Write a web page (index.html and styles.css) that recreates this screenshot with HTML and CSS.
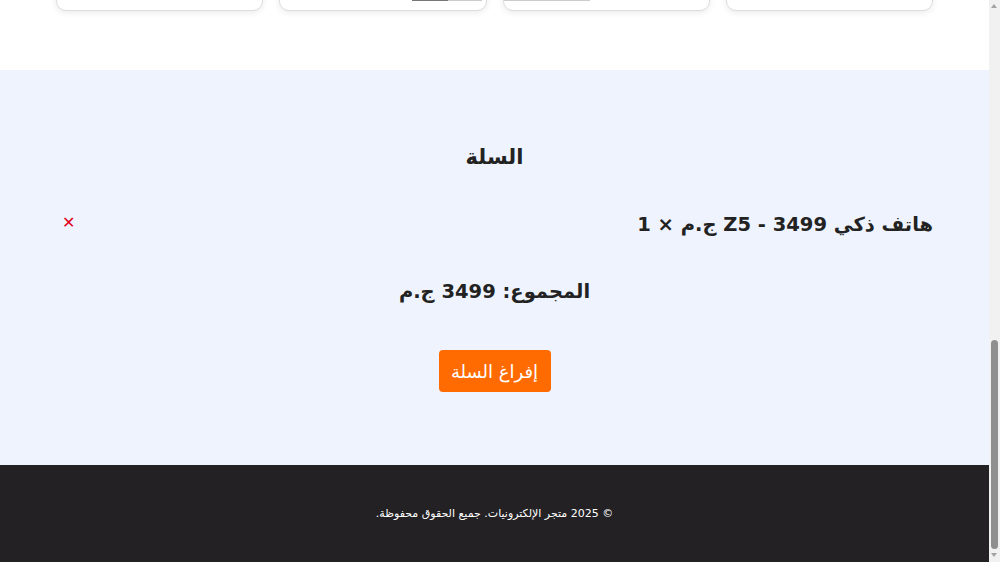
FILE: index.html
```html
<!DOCTYPE html>
<html lang="ar" dir="rtl">
<head>
<meta charset="utf-8">
<title>متجر الإلكترونيات</title>
<link rel="stylesheet" href="styles.css">
</head>
<body>
<div class="page">
  <section class="products">
    <div class="card"></div>
    <div class="card"><span class="line line-b"></span></div>
    <div class="card"><span class="line line-a"></span></div>
    <div class="card"></div>
  </section>
  <section class="cart">
    <h2 class="cart-title">السلة</h2>
    <div class="cart-item">
      <span class="item-text">هاتف ذكي Z5 - 3499 ج.م × 1</span>
      <button class="remove" aria-label="حذف">✕</button>
    </div>
    <h3 class="total">المجموع: 3499 ج.م</h3>
    <button class="clear">إفراغ السلة</button>
  </section>
  <footer class="footer">
    <p>© 2025 متجر الإلكترونيات. جميع الحقوق محفوظة.</p>
  </footer>
</div>
<div class="scrollbar">
  <span class="arrow up"></span>
  <span class="thumb"></span>
  <span class="arrow down"></span>
</div>
</body>
</html>
```
FILE: styles.css
```css
* { box-sizing: border-box; }
html, body { margin: 0; padding: 0; height: 562px; overflow: hidden; }
body {
  font-family: "DejaVu Sans", "Noto Sans", sans-serif;
  background: #ffffff;
  color: #333;
}
.page { width: 989px; margin-left: 0; margin-right: auto; }
.products {
  display: grid;
  grid-template-columns: repeat(4, 1fr);
  gap: 16px;
  padding: 0 56px 0 56px;
  margin-top: -40px;
  height: 110px;
}
.card {
  height: 51px;
  background: #fff;
  border: 1px solid #ddd;
  border-radius: 10px;
  box-shadow: 0 2px 6px rgba(0,0,0,0.08);
  position: relative;
}
.line {
  position: absolute;
  top: 39px;
  height: 1px;
  background: #ccc;
}
.line-a { left: 132px; width: 70px; }
.line-a::before { content: ""; position: absolute; left: 0; top: 0; width: 36px; height: 1px; background: #777; }
.line-b { left: 0; width: 86px; }
.cart {
  background: #eef3fd;
  height: 395px;
  padding: 70px 56px 0 56px;
  text-align: center;
}
.cart-title {
  margin: 0;
  font-size: 21px;
  font-weight: bold;
  line-height: 34px;
  color: #222;
}
.cart-item {
  display: flex;
  justify-content: space-between;
  align-items: center;
  margin-top: 34px;
  height: 32px;
}
.item-text {
  font-size: 19.5px;
  font-weight: 600;
  color: #222;
}
.remove {
  background: none;
  border: none;
  color: #e0001b;
  font-size: 16px;
  font-weight: bold;
  padding: 0 6px;
  margin-top: -4px;
  font-family: "DejaVu Sans", sans-serif;
}
.total {
  margin: 35px 0 0;
  font-size: 19.5px;
  font-weight: bold;
  line-height: 34px;
  color: #222;
}
.clear {
  margin-top: 41px;
  background: #ff6b00;
  color: #fff;
  border: none;
  border-radius: 4px;
  width: 112px;
  height: 42px;
  font-size: 18px;
  font-family: "DejaVu Sans", sans-serif;
}
.footer {
  background: #232124;
  height: 97px;
  display: flex;
  align-items: center;
  justify-content: center;
}
.footer p {
  margin: 0;
  color: #fff;
  font-size: 11px;
}
.scrollbar {
  position: fixed;
  top: 0;
  right: 0;
  width: 11px;
  height: 562px;
  background: #f1f1f1;
}
.arrow {
  position: absolute;
  left: 2px;
  width: 0;
  height: 0;
  border-left: 3.5px solid transparent;
  border-right: 3.5px solid transparent;
}
.arrow.up { top: 4px; border-bottom: 4px solid #a3a3a3; }
.arrow.down { bottom: 5px; border-top: 4px solid #a3a3a3; }
.thumb {
  position: absolute;
  left: 2px;
  top: 340px;
  width: 7px;
  height: 209px;
  border-radius: 4px;
  background: #8f8f8f;
}
```
